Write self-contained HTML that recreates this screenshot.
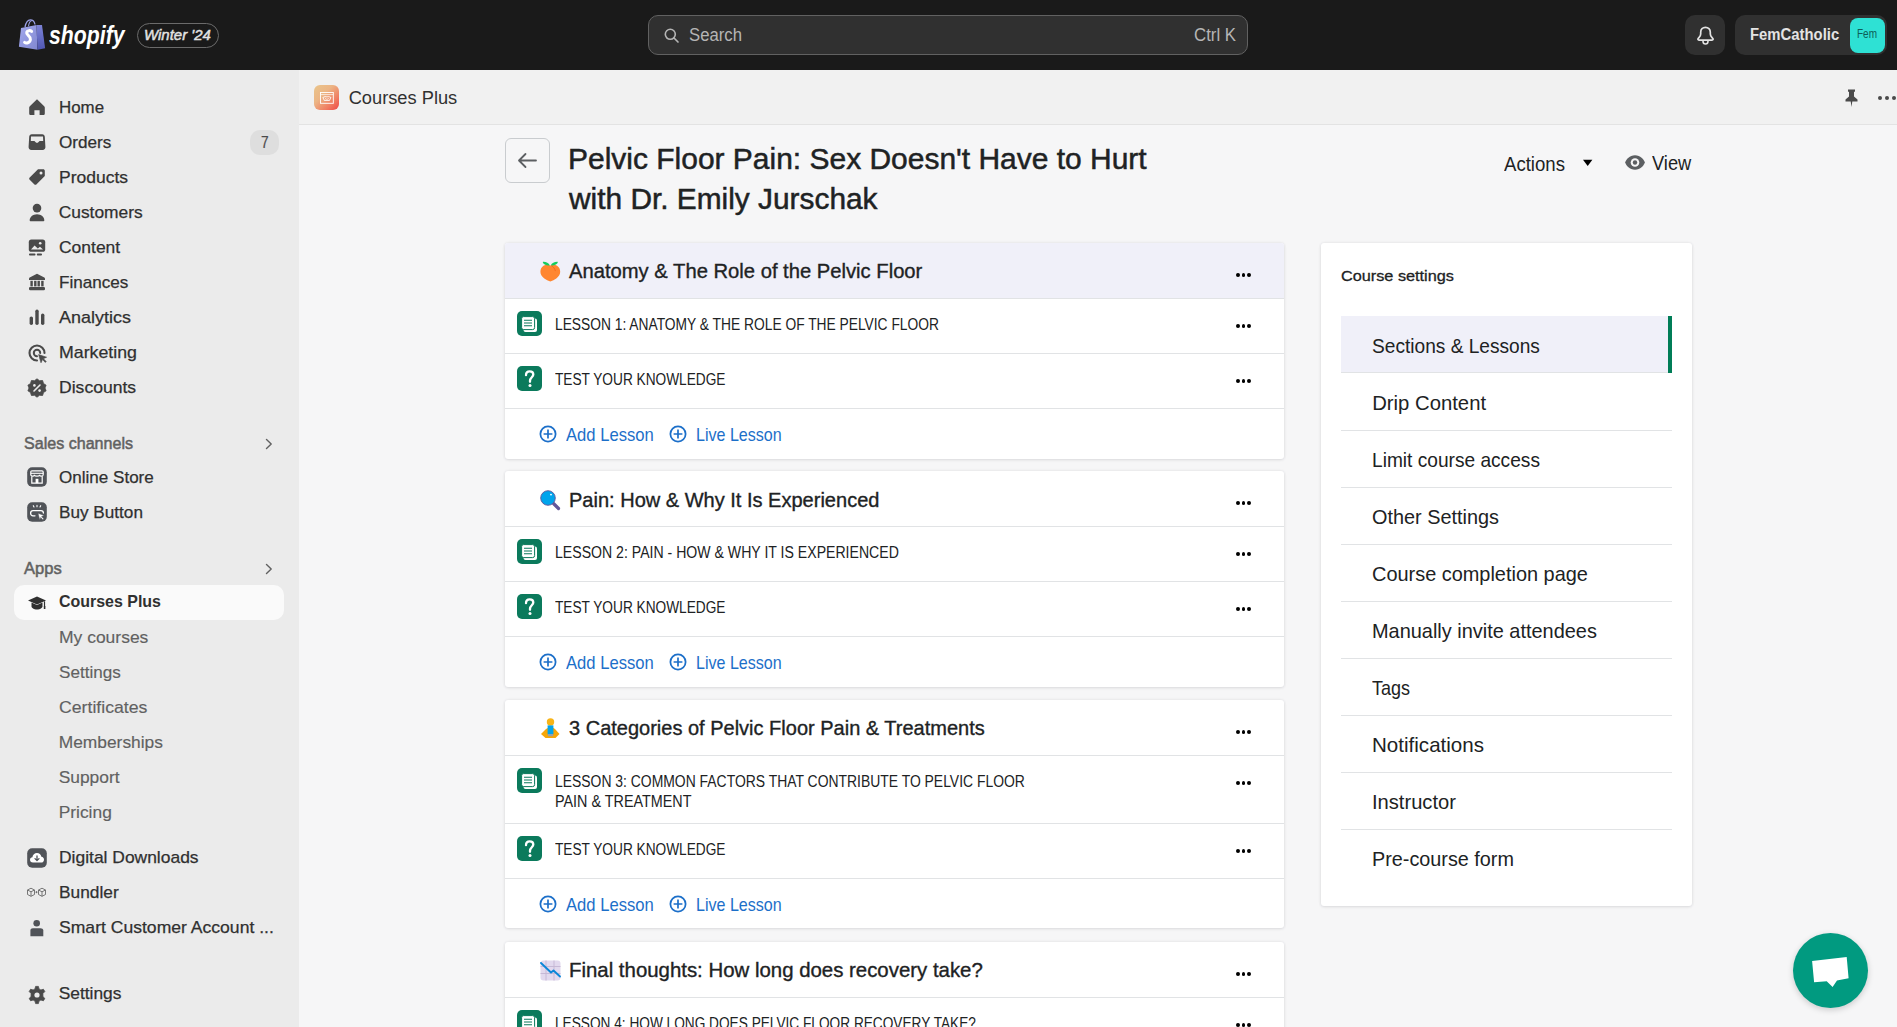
<!DOCTYPE html>
<html><head><meta charset="utf-8"><style>
html,body{margin:0;padding:0;width:1897px;height:1027px;overflow:hidden;background:#f6f6f7;font-family:"Liberation Sans",sans-serif;}
.t{position:absolute;white-space:nowrap;line-height:1;font-family:"Liberation Sans",sans-serif;}
svg{overflow:visible}
</style></head><body>
<div style="position:absolute;left:0px;top:0px;width:1897px;height:70px;background:#1a1a1a"></div>
<div style="position:absolute;left:0px;top:70px;width:299px;height:957px;background:#ebebeb"></div>
<div style="position:absolute;left:299px;top:70px;width:1598px;height:55px;background:#f1f1f1;border-bottom:1px solid #e3e3e3;box-sizing:border-box"></div>
<div style="position:absolute;left:299px;top:125px;width:1598px;height:902px;background:#f6f6f7"></div>
<svg style="position:absolute;left:14px;top:14px;" width="40" height="40" viewBox="0 0 40 40"><defs><linearGradient id="bgf" x1="0" y1="0" x2="1" y2="1"><stop offset="0" stop-color="#a3a9ee"/><stop offset="1" stop-color="#8087d0"/></linearGradient><linearGradient id="bgs" x1="0" y1="0" x2="0" y2="1"><stop offset="0" stop-color="#7d83d6"/><stop offset="1" stop-color="#4f57b3"/></linearGradient></defs><path d="M11 13 C12 8 14 5.8 16.3 5.8 C18.6 5.8 20.5 7.5 21 10.5" fill="none" stroke="#9aa0e6" stroke-width="1.3"/><path d="M14.5 12.2 C15 8.5 16.5 6.5 18.5 6.5" fill="none" stroke="#9aa0e6" stroke-width="1.1"/><path d="M7 14 L22.5 11 L23.5 35.8 L4.9 32.8 Z" fill="url(#bgf)"/><path d="M22.5 11 L28 10.9 L31.1 34.2 L23.5 35.8 Z" fill="url(#bgs)"/><path d="M17.6 17.4 C16.4 16.3 13.4 16.2 12.7 18.2 C11.8 21 16.9 21.6 16.4 25.6 C15.9 29.3 12 29.5 10.6 28.4" fill="none" stroke="#fff" stroke-width="3" stroke-linecap="round"/></svg>
<div class="t" style="left:49.20px;top:23.21px;font-size:25.50px;color:#ffffff;font-weight:bold;font-style:italic;transform:scaleX(0.8333);transform-origin:0 0;">shopify</div>
<div style="position:absolute;left:137px;top:23px;width:82px;height:25px;border:1px solid #6b6b6b;border-radius:13px;box-sizing:border-box"></div>
<div class="t" style="left:143.80px;top:28.19px;font-size:14.78px;color:#e3e3e3;font-style:italic;transform:scaleX(1.0147);transform-origin:0 0;-webkit-text-stroke:0.45px #e3e3e3;">Winter &#x27;24</div>
<div style="position:absolute;left:648px;top:15px;width:600px;height:40px;background:#303030;border:1px solid #616161;border-radius:10px;box-sizing:border-box"></div>
<svg style="position:absolute;left:664px;top:28px;" width="15" height="15" viewBox="0 0 15 15"><circle cx="6.3" cy="6.3" r="5" fill="none" stroke="#b5b5b5" stroke-width="1.6"/><path d="M10 10 L14 14" stroke="#b5b5b5" stroke-width="1.7" stroke-linecap="round"/></svg>
<div class="t" style="left:689.20px;top:26.73px;font-size:17.68px;color:#b5b5b5;transform:scaleX(0.9456);transform-origin:0 0;">Search</div>
<div class="t" style="left:1193.80px;top:26.73px;font-size:17.68px;color:#b5b5b5;transform:scaleX(0.9502);transform-origin:0 0;">Ctrl K</div>
<div style="position:absolute;left:1685px;top:15px;width:40px;height:40px;background:#303030;border-radius:10px"></div>
<svg style="position:absolute;left:1696px;top:26px;" width="19" height="20" viewBox="0 0 19 20"><path d="M9.5 1.3 C6.7 1.3 4.7 3.4 4.7 6.2 V8.1 C4.7 9.5 4.1 10.5 2.9 11.7 L2.3 12.3 C1.5 13.1 1.9 14.1 3 14.1 H16 C17.1 14.1 17.5 13.1 16.7 12.3 L16.1 11.7 C14.9 10.5 14.3 9.5 14.3 8.1 V6.2 C14.3 3.4 12.3 1.3 9.5 1.3 Z" fill="none" stroke="#e3e3e3" stroke-width="1.7" stroke-linejoin="round"/><path d="M7 14.3 V15.3 C7 16.9 8.1 18 9.5 18 C10.9 18 12 16.9 12 15.3 V14.3" fill="none" stroke="#e3e3e3" stroke-width="1.6"/></svg>
<div style="position:absolute;left:1735px;top:15px;width:152px;height:40px;background:#303030;border-radius:10px"></div>
<div class="t" style="left:1749.70px;top:26.81px;font-size:16.52px;color:#e3e3e3;font-weight:bold;transform:scaleX(0.8998);transform-origin:0 0;">FemCatholic</div>
<div style="position:absolute;left:1850px;top:18px;width:35px;height:35px;background:#2ee1d4;border-radius:8px"></div>
<div class="t" style="left:1856.70px;top:29.44px;font-size:11.88px;color:#0d5d57;transform:scaleX(0.8415);transform-origin:0 0;">Fem</div>
<div style="position:absolute;left:314px;top:85px;width:25px;height:25px;border-radius:6px;background:linear-gradient(135deg,#eac58b 0%,#ecb585 38%,#f07d62 72%,#ee4646 100%)"></div>
<svg style="position:absolute;left:320px;top:91.5px;" width="14" height="12" viewBox="0 0 14 12"><rect x="0.5" y="0.5" width="12.8" height="10.8" fill="none" stroke="#fff" stroke-width="0.9"/><path d="M0.5 2.6 H13.3" stroke="#fff" stroke-width="0.7"/><path d="M2.8 5.6 C4.5 4.4 5.8 4.6 6.9 4.9 C8 4.6 9.3 4.4 11 5.6 C10.2 6.4 9.9 7.4 9.6 8.4 H4.2 C3.9 7.4 3.6 6.4 2.8 5.6 Z" fill="none" stroke="#fff" stroke-width="0.9"/><path d="M5 6.4 L6.9 7.4 L8.8 6.4" fill="none" stroke="#fff" stroke-width="0.7"/></svg>
<div class="t" style="left:348.70px;top:89.04px;font-size:18.26px;color:#303030;">Courses Plus</div>
<svg style="position:absolute;left:1845px;top:89px;" width="13" height="18" viewBox="0 0 13 18"><path d="M3 0.5 H10 V2.5 L9 3 V7.5 L12.5 10.5 V12.5 H7.3 L6.5 18 L5.7 12.5 H0.5 V10.5 L4 7.5 V3 L3 2.5 Z" fill="#4a4a4a"/></svg>
<div style="position:absolute;left:1877.5px;top:95.5px;width:4px;height:4px;background:#4a4a4a;border-radius:50%"></div>
<div style="position:absolute;left:1884.5px;top:95.5px;width:4px;height:4px;background:#4a4a4a;border-radius:50%"></div>
<div style="position:absolute;left:1891.5px;top:95.5px;width:4px;height:4px;background:#4a4a4a;border-radius:50%"></div>
<div class="t" style="left:58.70px;top:98.78px;font-size:17.39px;color:#303030;transform:scaleX(0.9713);transform-origin:0 0;-webkit-text-stroke:0.25px #303030;">Home</div>
<div class="t" style="left:58.70px;top:133.78px;font-size:17.39px;color:#303030;transform:scaleX(0.9863);transform-origin:0 0;-webkit-text-stroke:0.25px #303030;">Orders</div>
<div class="t" style="left:58.70px;top:168.78px;font-size:17.39px;color:#303030;transform:scaleX(1.0072);transform-origin:0 0;-webkit-text-stroke:0.25px #303030;">Products</div>
<div class="t" style="left:58.70px;top:203.78px;font-size:17.39px;color:#303030;-webkit-text-stroke:0.25px #303030;">Customers</div>
<div class="t" style="left:58.70px;top:238.78px;font-size:17.39px;color:#303030;transform:scaleX(1.0056);transform-origin:0 0;-webkit-text-stroke:0.25px #303030;">Content</div>
<div class="t" style="left:58.70px;top:273.78px;font-size:17.39px;color:#303030;transform:scaleX(0.9843);transform-origin:0 0;-webkit-text-stroke:0.25px #303030;">Finances</div>
<div class="t" style="left:58.70px;top:308.78px;font-size:17.39px;color:#303030;transform:scaleX(1.0336);transform-origin:0 0;-webkit-text-stroke:0.25px #303030;">Analytics</div>
<div class="t" style="left:58.70px;top:343.78px;font-size:17.39px;color:#303030;transform:scaleX(1.0216);transform-origin:0 0;-webkit-text-stroke:0.25px #303030;">Marketing</div>
<div class="t" style="left:58.70px;top:378.78px;font-size:17.39px;color:#303030;transform:scaleX(1.0112);transform-origin:0 0;-webkit-text-stroke:0.25px #303030;">Discounts</div>
<div style="position:absolute;left:250px;top:130px;width:29px;height:25px;background:#dedede;border-radius:10px"></div>
<div class="t" style="left:260.50px;top:135.01px;font-size:15.94px;color:#4a4a4a;transform:scaleX(0.8590);transform-origin:0 0;-webkit-text-stroke:0.2px #4a4a4a;">7</div>
<div class="t" style="left:23.50px;top:435.36px;font-size:16.23px;color:#616161;transform:scaleX(0.9913);transform-origin:0 0;-webkit-text-stroke:0.5px #616161;">Sales channels</div>
<div class="t" style="left:23.50px;top:559.76px;font-size:16.23px;color:#616161;transform:scaleX(1.0187);transform-origin:0 0;-webkit-text-stroke:0.5px #616161;">Apps</div>
<svg style="position:absolute;left:265px;top:437.5px;" width="8" height="12" viewBox="0 0 8 12"><path d="M1.5 1.5 L6.2 6 L1.5 10.5" fill="none" stroke="#616161" stroke-width="1.4" stroke-linecap="round" stroke-linejoin="round"/></svg>
<svg style="position:absolute;left:265px;top:562.5px;" width="8" height="12" viewBox="0 0 8 12"><path d="M1.5 1.5 L6.2 6 L1.5 10.5" fill="none" stroke="#616161" stroke-width="1.4" stroke-linecap="round" stroke-linejoin="round"/></svg>
<div class="t" style="left:58.70px;top:468.78px;font-size:17.39px;color:#303030;transform:scaleX(0.9814);transform-origin:0 0;-webkit-text-stroke:0.25px #303030;">Online Store</div>
<div class="t" style="left:58.70px;top:503.78px;font-size:17.39px;color:#303030;transform:scaleX(0.9877);transform-origin:0 0;-webkit-text-stroke:0.25px #303030;">Buy Button</div>
<div style="position:absolute;left:14px;top:585px;width:270px;height:35px;background:#fafafa;border-radius:10px"></div>
<div class="t" style="left:58.70px;top:593.48px;font-size:17.39px;color:#303030;font-weight:bold;transform:scaleX(0.9178);transform-origin:0 0;">Courses Plus</div>
<div class="t" style="left:58.70px;top:628.78px;font-size:17.39px;color:#616161;transform:scaleX(1.0060);transform-origin:0 0;-webkit-text-stroke:0.15px #616161;">My courses</div>
<div class="t" style="left:58.70px;top:663.78px;font-size:17.39px;color:#616161;transform:scaleX(0.9830);transform-origin:0 0;-webkit-text-stroke:0.15px #616161;">Settings</div>
<div class="t" style="left:58.70px;top:698.78px;font-size:17.39px;color:#616161;transform:scaleX(1.0177);transform-origin:0 0;-webkit-text-stroke:0.15px #616161;">Certificates</div>
<div class="t" style="left:58.70px;top:733.78px;font-size:17.39px;color:#616161;-webkit-text-stroke:0.15px #616161;">Memberships</div>
<div class="t" style="left:58.70px;top:768.78px;font-size:17.39px;color:#616161;-webkit-text-stroke:0.15px #616161;">Support</div>
<div class="t" style="left:58.70px;top:803.78px;font-size:17.39px;color:#616161;-webkit-text-stroke:0.15px #616161;">Pricing</div>
<div class="t" style="left:58.70px;top:848.78px;font-size:17.39px;color:#303030;transform:scaleX(1.0035);transform-origin:0 0;-webkit-text-stroke:0.25px #303030;">Digital Downloads</div>
<div class="t" style="left:58.70px;top:883.78px;font-size:17.39px;color:#303030;transform:scaleX(0.9964);transform-origin:0 0;-webkit-text-stroke:0.25px #303030;">Bundler</div>
<div class="t" style="left:58.70px;top:918.78px;font-size:17.39px;color:#303030;transform:scaleX(1.0112);transform-origin:0 0;-webkit-text-stroke:0.25px #303030;">Smart Customer Account ...</div>
<div class="t" style="left:58.70px;top:985.28px;font-size:17.39px;color:#303030;-webkit-text-stroke:0.25px #303030;">Settings</div>
<svg style="position:absolute;left:26.5px;top:96.8px;" width="20" height="20" viewBox="0 0 20 20"><path d="M10 2.3 L17.2 9.2 C17.6 9.6 17.8 10.1 17.8 10.6 V16.4 C17.8 17.4 17.1 18 16.2 18 H12.6 V13.2 H7.4 V18 H3.8 C2.9 18 2.2 17.4 2.2 16.4 V10.6 C2.2 10.1 2.4 9.6 2.8 9.2 Z" fill="#4a4a4a"/></svg>
<svg style="position:absolute;left:26.5px;top:132px;" width="20" height="20" viewBox="0 0 20 20"><path d="M4.8 2.3 H15.2 C16.8 2.3 17.6 3.2 17.8 4.8 L18.4 14.8 C18.6 16.6 17.4 18 15.6 18 H4.4 C2.6 18 1.4 16.6 1.6 14.8 L2.2 4.8 C2.4 3.2 3.2 2.3 4.8 2.3 Z" fill="#4a4a4a"/><path d="M4 4.6 H16 L16.2 9 H12.6 L10.8 10.8 H9.2 L7.4 9 H3.8 Z" fill="#ebebeb"/></svg>
<svg style="position:absolute;left:26.5px;top:166.8px;" width="20" height="20" viewBox="0 0 20 20"><path d="M11 2.2 H16.2 C17.1 2.2 17.8 2.9 17.8 3.8 V9 L9.6 17.3 C8.9 18 7.9 18 7.2 17.3 L2.7 12.8 C2 12.1 2 11.1 2.7 10.4 Z" fill="#4a4a4a"/><circle cx="14" cy="6" r="1.5" fill="#ebebeb"/></svg>
<svg style="position:absolute;left:26.5px;top:201.5px;" width="20" height="20" viewBox="0 0 20 20"><circle cx="10" cy="6.1" r="4.3" fill="#4a4a4a"/><path d="M2.7 18.2 C2.7 15 5.8 12.2 10 12.2 C14.2 12.2 17.3 15 17.3 18.2 C17.3 18.8 16.9 19.3 16.2 19.3 H3.8 C3.1 19.3 2.7 18.8 2.7 18.2 Z" fill="#4a4a4a"/></svg>
<svg style="position:absolute;left:26.5px;top:236.8px;" width="20" height="20" viewBox="0 0 20 20"><rect x="1.8" y="2.6" width="16.4" height="12.2" rx="2.6" fill="#4a4a4a"/><path d="M4 12.5 L7.6 8.6 L10.8 11.6 L13 9.8 L16 12.5 Z" fill="#ebebeb"/><circle cx="13.2" cy="6.2" r="1.3" fill="#ebebeb"/><rect x="2" y="16.6" width="6.5" height="1.9" rx="0.9" fill="#4a4a4a"/><rect x="9.8" y="16.6" width="5.2" height="1.9" rx="0.9" fill="#4a4a4a"/></svg>
<svg style="position:absolute;left:26.5px;top:271.5px;" width="20" height="20" viewBox="0 0 20 20"><path d="M10 1.8 L17.3 5.6 C17.8 5.9 18 6.4 18 6.9 V8 H2 V6.9 C2 6.4 2.2 5.9 2.7 5.6 Z" fill="#4a4a4a"/><rect x="3.4" y="8.8" width="2.4" height="5.6" fill="#4a4a4a"/><rect x="7.1" y="8.8" width="2.4" height="5.6" fill="#4a4a4a"/><rect x="10.5" y="8.8" width="2.4" height="5.6" fill="#4a4a4a"/><rect x="14.2" y="8.8" width="2.4" height="5.6" fill="#4a4a4a"/><rect x="2" y="15" width="16" height="3.2" rx="1.3" fill="#4a4a4a"/></svg>
<svg style="position:absolute;left:26.5px;top:306.5px;" width="20" height="20" viewBox="0 0 20 20"><rect x="2.6" y="9.4" width="3.4" height="8.6" rx="1.7" fill="#4a4a4a"/><rect x="8.3" y="2.6" width="3.4" height="15.4" rx="1.7" fill="#4a4a4a"/><rect x="14" y="6.6" width="3.4" height="11.4" rx="1.7" fill="#4a4a4a"/></svg>
<svg style="position:absolute;left:26.5px;top:342.5px;" width="20" height="20" viewBox="0 0 20 20"><path d="M17.5 10 A7.5 7.5 0 1 0 10 17.5" fill="none" stroke="#4a4a4a" stroke-width="2.1" stroke-linecap="round"/><path d="M13.2 10 A3.2 3.2 0 1 0 10 13.2" fill="none" stroke="#4a4a4a" stroke-width="2" stroke-linecap="round"/><path d="M11.6 11.6 L19.6 14.2 L16.4 15.7 L19.2 18.5 L18.3 19.4 L15.5 16.6 L14 19.8 Z" fill="#4a4a4a" stroke="#4a4a4a" stroke-width="0.6" stroke-linejoin="round"/></svg>
<svg style="position:absolute;left:26.5px;top:377.5px;" width="20" height="20" viewBox="0 0 20 20"><path d="M10 0.8 L12.5 2.7 L15.6 2.5 L16.5 5.5 L19.1 7.2 L18 10 L19.1 12.8 L16.5 14.5 L15.6 17.5 L12.5 17.3 L10 19.2 L7.5 17.3 L4.4 17.5 L3.5 14.5 L0.9 12.8 L2 10 L0.9 7.2 L3.5 5.5 L4.4 2.5 L7.5 2.7 Z" fill="#4a4a4a" stroke="#4a4a4a" stroke-width="0.8" stroke-linejoin="round"/><path d="M7 13 L13 7" stroke="#ebebeb" stroke-width="1.6" stroke-linecap="round"/><circle cx="7.4" cy="7.4" r="1.3" fill="#ebebeb"/><circle cx="12.6" cy="12.6" r="1.3" fill="#ebebeb"/></svg>
<svg style="position:absolute;left:26.5px;top:467.2px;" width="20" height="20" viewBox="0 0 20 20"><rect x="0.2" y="0.2" width="19.6" height="19.6" rx="5" fill="#505358"/><path d="M5 3.8 H15 C15.7 3.8 16.2 4.3 16.2 5 V7.4 C16.2 8.4 15.4 9.2 14.4 9.2 C13.5 9.2 12.8 8.6 12.6 7.8 C12.4 8.6 11.3 9.2 10 9.2 C8.7 9.2 7.6 8.6 7.4 7.8 C7.2 8.6 6.5 9.2 5.6 9.2 C4.6 9.2 3.8 8.4 3.8 7.4 V5 C3.8 4.3 4.3 3.8 5 3.8 Z" fill="none" stroke="#fff" stroke-width="1.2"/><path d="M3.8 6.3 H16.2" stroke="#fff" stroke-width="1.1"/><path d="M4.8 9.2 V16.2 H15.2 V9.2" fill="none" stroke="#fff" stroke-width="1.2"/><rect x="8.6" y="11.8" width="2.8" height="4.4" fill="#fff"/></svg>
<svg style="position:absolute;left:26.5px;top:502.3px;" width="20" height="20" viewBox="0 0 20 20"><rect x="0.2" y="0.2" width="19.6" height="19.6" rx="5" fill="#505358"/><path d="M6.3 3.7 L7 5 M10 3.4 V4.8 M13.7 3.7 L13 5" stroke="#fff" stroke-width="1.1" stroke-linecap="round"/><path d="M8 13.8 H6 C4.6 13.8 3.6 12.8 3.6 11.2 C3.6 9.6 4.6 8.6 6 8.6 H14 C15.4 8.6 16.4 9.6 16.4 11" fill="none" stroke="#fff" stroke-width="1.3" stroke-linecap="round"/><path d="M11 11.2 L17.2 13.6 L14.6 14.6 L16.8 16.8 L15.9 17.7 L13.7 15.5 L12.8 18 Z" fill="#fff" stroke="#505358" stroke-width="0.5"/></svg>
<svg style="position:absolute;left:26.5px;top:592.5px;" width="20" height="20" viewBox="0 0 20 20"><path d="M10 3.5 L19 7.5 L10 11.5 L1 7.5 Z" fill="#303030"/><path d="M4.5 9.5 V13.5 C4.5 15 7 16.5 10 16.5 C13 16.5 15.5 15 15.5 13.5 V9.5 L10 12 Z" fill="#303030"/><path d="M17.5 8.3 V13.5" stroke="#303030" stroke-width="1.2"/><rect x="16.8" y="13" width="1.6" height="3" fill="#303030"/></svg>
<svg style="position:absolute;left:26.5px;top:847.5px;" width="20" height="20" viewBox="0 0 20 20"><rect x="0.2" y="0.2" width="19.6" height="19.6" rx="5" fill="#505358"/><path d="M6 14.6 C3.9 14.6 3 13.2 3 11.8 C3 10.4 4 9.3 5.4 9.2 C5.7 6.8 7.6 5 10 5 C12.2 5 14 6.6 14.4 8.8 C16 8.9 17 10.2 17 11.7 C17 13.2 15.9 14.6 14.1 14.6 Z" fill="#fff"/><path d="M10 8 V12.3 M8 10.6 L10 12.6 L12 10.6" fill="none" stroke="#505358" stroke-width="1.3" stroke-linecap="round" stroke-linejoin="round"/></svg>
<svg style="position:absolute;left:26px;top:887px;" width="21" height="11" viewBox="0 0 21 11"><g fill="none" stroke="#6a6a6a" stroke-width="0.9"><path d="M1.5 3 L5 1.2 L8.5 3 V7.5 L5 9.3 L1.5 7.5 Z M1.5 3 L5 4.8 L8.5 3 M5 4.8 V9.3"/><path d="M12.5 3 L16 1.2 L19.5 3 V7.5 L16 9.3 L12.5 7.5 Z M12.5 3 L16 4.8 L19.5 3 M16 4.8 V9.3"/><path d="M9.5 5.2 H11.5 M10.5 4.2 V6.2"/></g></svg>
<svg style="position:absolute;left:26.5px;top:916.5px;" width="20" height="20" viewBox="0 0 20 20"><circle cx="9.7" cy="6.3" r="3.3" fill="#505358"/><path d="M3.4 19.2 V13.4 C3.4 12 4.5 11.2 5.8 11.2 H13.6 C14.9 11.2 16.3 12 16.3 13.4 V19.2 Z" fill="#505358"/></svg>
<svg style="position:absolute;left:26.5px;top:984.5px;" width="20" height="20" viewBox="0 0 20 20"><path d="M8.6 1.4 H11.4 L12 3.9 L13.9 5 L16.4 4.2 L17.8 6.6 L15.9 8.5 V11.5 L17.8 13.4 L16.4 15.8 L13.9 15 L12 16.1 L11.4 18.6 H8.6 L8 16.1 L6.1 15 L3.6 15.8 L2.2 13.4 L4.1 11.5 V8.5 L2.2 6.6 L3.6 4.2 L6.1 5 L8 3.9 Z" fill="#4a4a4a" stroke="#4a4a4a" stroke-width="0.8" stroke-linejoin="round"/><circle cx="10" cy="10" r="2.6" fill="#ebebeb"/></svg>
<div style="position:absolute;left:505px;top:138px;width:45px;height:45px;border:1px solid #c9cccf;border-radius:6px;box-sizing:border-box;background:#f6f6f7"></div>
<svg style="position:absolute;left:517px;top:152px;" width="20" height="17" viewBox="0 0 20 17"><path d="M19 8.5 H2.2 M8.5 2 L2 8.5 L8.5 15" fill="none" stroke="#5c5f62" stroke-width="1.8" stroke-linecap="round" stroke-linejoin="round"/></svg>
<div class="t" style="left:568.40px;top:143.78px;font-size:30.14px;color:#202223;transform:scaleX(0.9947);transform-origin:0 0;-webkit-text-stroke:0.5px #202223;">Pelvic Floor Pain: Sex Doesn&#x27;t Have to Hurt</div>
<div class="t" style="left:568.55px;top:183.58px;font-size:30.14px;color:#202223;transform:scaleX(0.9909);transform-origin:0 0;-webkit-text-stroke:0.5px #202223;">with Dr. Emily Jurschak</div>
<div class="t" style="left:1503.50px;top:154.12px;font-size:20.29px;color:#202223;transform:scaleX(0.9166);transform-origin:0 0;">Actions</div>
<svg style="position:absolute;left:1582px;top:159px;" width="12" height="9" viewBox="0 0 12 9"><path d="M1 0.7 H10.4 L5.7 7 Z" fill="#000"/></svg>
<svg style="position:absolute;left:1625px;top:155px;" width="20" height="15" viewBox="0 0 20 15"><path d="M10 0.3 C4.6 0.3 1.2 4.4 0.2 7.5 C1.2 10.6 4.6 14.7 10 14.7 C15.4 14.7 18.8 10.6 19.8 7.5 C18.8 4.4 15.4 0.3 10 0.3 Z" fill="#5c5f62"/><circle cx="10" cy="7.5" r="4.3" fill="#f6f6f7"/><circle cx="10" cy="7.5" r="2.2" fill="#5c5f62"/></svg>
<div class="t" style="left:1652.20px;top:153.82px;font-size:19.71px;color:#202223;transform:scaleX(0.9274);transform-origin:0 0;">View</div>
<div style="position:absolute;left:505px;top:243px;width:779px;height:216px;background:#fff;border-radius:3px;box-shadow:0 0 3px rgba(63,63,68,0.10),0 1px 3px rgba(63,63,68,0.10)"></div>
<div style="position:absolute;left:505px;top:243px;width:779px;height:55px;background:#f0f0f9;border-radius:3px 3px 0 0"></div>
<svg style="position:absolute;left:539.5px;top:260.5px" width="21" height="21" viewBox="0 0 21 21"><path d="M10.3 4.6 C8 3.6 5.5 3.5 3.5 4.8 C1.4 6.1 0.4 8.3 0.4 10.8 C0.4 13.6 2 15.8 4.3 17.4 C6.1 18.7 8.2 19.8 10.3 20.6 C12.4 19.8 14.5 18.7 16.3 17.4 C18.6 15.8 20.2 13.6 20.2 10.8 C20.2 8.3 19.2 6.1 17.1 4.8 C15.1 3.5 12.6 3.6 10.3 4.6 Z" fill="#ff8630"/><path d="M9.9 4.4 C8.6 1.8 5.6 0.6 2.7 0.9 C3.2 3.4 6.3 4.8 9.9 4.4 Z M10.7 4.4 C12 1.8 15 0.6 17.9 0.9 C17.4 3.4 14.3 4.8 10.7 4.4 Z" fill="#16cc5e"/><path d="M11.8 5 C13.6 6 14.9 7.6 15.3 9.7" fill="none" stroke="#f4661c" stroke-width="0.9" stroke-linecap="round"/></svg>
<div class="t" style="left:568.70px;top:261.02px;font-size:20.29px;color:#202223;transform:scaleX(0.9961);transform-origin:0 0;-webkit-text-stroke:0.35px #202223;">Anatomy &amp; The Role of the Pelvic Floor</div>
<div style="position:absolute;left:1236.05px;top:272.85px;width:3.9px;height:3.9px;background:#000;border-radius:50%"></div>
<div style="position:absolute;left:1241.55px;top:272.85px;width:3.9px;height:3.9px;background:#000;border-radius:50%"></div>
<div style="position:absolute;left:1246.95px;top:272.85px;width:3.9px;height:3.9px;background:#000;border-radius:50%"></div>
<div style="position:absolute;left:505px;top:298px;width:779px;height:1px;background:#e1e3e5"></div>
<div style="position:absolute;left:517px;top:310.5px;width:25px;height:25px;background:#0b7a5c;border-radius:5px"></div>
<svg style="position:absolute;left:521px;top:315.5px;" width="17" height="17" viewBox="0 0 17 17"><rect x="2.5" y="2.5" width="13.5" height="13.5" rx="2" fill="#fff"/><rect x="2.5" y="2.5" width="13.5" height="13.5" rx="2" fill="none" stroke="#0b7a5c" stroke-width="0"/><rect x="0.6" y="0.6" width="13" height="13" rx="2" fill="#fff" stroke="#0b7a5c" stroke-width="1"/><path d="M3 4.2 H11 M3 7 H11 M3 9.8 H11" stroke="#0b7a5c" stroke-width="1.1"/></svg>
<div class="t" style="left:555.20px;top:316.51px;font-size:15.94px;color:#202223;transform:scaleX(0.8652);transform-origin:0 0;">LESSON 1: ANATOMY &amp; THE ROLE OF THE PELVIC FLOOR</div>
<div style="position:absolute;left:1236.05px;top:323.85px;width:3.9px;height:3.9px;background:#000;border-radius:50%"></div>
<div style="position:absolute;left:1241.55px;top:323.85px;width:3.9px;height:3.9px;background:#000;border-radius:50%"></div>
<div style="position:absolute;left:1246.95px;top:323.85px;width:3.9px;height:3.9px;background:#000;border-radius:50%"></div>
<div style="position:absolute;left:505px;top:353px;width:779px;height:1px;background:#e1e3e5"></div>
<div style="position:absolute;left:517px;top:365.5px;width:25px;height:25px;background:#0b7a5c;border-radius:5px"></div>
<svg style="position:absolute;left:517px;top:365.5px;" width="25" height="25" viewBox="0 0 25 25"><path d="M9 9.2 C9 6.8 10.6 5.3 12.7 5.3 C14.8 5.3 16.3 6.7 16.3 8.6 C16.3 11.2 13 11.5 13 14.8 V15.8" fill="none" stroke="#fff" stroke-width="2.3" stroke-linecap="round"/><circle cx="13" cy="19.6" r="1.5" fill="#fff"/></svg>
<div class="t" style="left:555.20px;top:371.51px;font-size:15.94px;color:#202223;transform:scaleX(0.8580);transform-origin:0 0;">TEST YOUR KNOWLEDGE</div>
<div style="position:absolute;left:1236.05px;top:378.85px;width:3.9px;height:3.9px;background:#000;border-radius:50%"></div>
<div style="position:absolute;left:1241.55px;top:378.85px;width:3.9px;height:3.9px;background:#000;border-radius:50%"></div>
<div style="position:absolute;left:1246.95px;top:378.85px;width:3.9px;height:3.9px;background:#000;border-radius:50%"></div>
<div style="position:absolute;left:505px;top:408px;width:779px;height:1px;background:#e1e3e5"></div>
<svg style="position:absolute;left:539.4px;top:424.7px;" width="18" height="18" viewBox="0 0 18 18"><circle cx="9" cy="9" r="7.6" fill="none" stroke="#1c6fc9" stroke-width="1.75"/><path d="M9 4.6 V13.4 M4.6 9 H13.4" stroke="#1c6fc9" stroke-width="1.7"/></svg>
<div class="t" style="left:565.80px;top:425.31px;font-size:19.13px;color:#1c6fc9;transform:scaleX(0.8692);transform-origin:0 0;">Add Lesson</div>
<svg style="position:absolute;left:669.4px;top:424.7px;" width="18" height="18" viewBox="0 0 18 18"><circle cx="9" cy="9" r="7.6" fill="none" stroke="#1c6fc9" stroke-width="1.75"/><path d="M9 4.6 V13.4 M4.6 9 H13.4" stroke="#1c6fc9" stroke-width="1.7"/></svg>
<div class="t" style="left:696.20px;top:425.31px;font-size:19.13px;color:#1c6fc9;transform:scaleX(0.8397);transform-origin:0 0;">Live Lesson</div>
<div style="position:absolute;left:505px;top:471px;width:779px;height:216px;background:#fff;border-radius:3px;box-shadow:0 0 3px rgba(63,63,68,0.10),0 1px 3px rgba(63,63,68,0.10)"></div>
<svg style="position:absolute;left:539.5px;top:490.0px" width="21" height="21" viewBox="0 0 21 21"><path d="M13.5 13.5 L18.5 18.5" stroke="#62579a" stroke-width="3.2" stroke-linecap="round"/><circle cx="8" cy="8" r="7.3" fill="#00a4ec" stroke="#62579a" stroke-width="0.9"/><circle cx="11" cy="4.6" r="0.9" fill="#fff"/></svg>
<div class="t" style="left:568.70px;top:489.92px;font-size:20.29px;color:#202223;transform:scaleX(0.9870);transform-origin:0 0;-webkit-text-stroke:0.35px #202223;">Pain: How &amp; Why It Is Experienced</div>
<div style="position:absolute;left:1236.05px;top:500.85px;width:3.9px;height:3.9px;background:#000;border-radius:50%"></div>
<div style="position:absolute;left:1241.55px;top:500.85px;width:3.9px;height:3.9px;background:#000;border-radius:50%"></div>
<div style="position:absolute;left:1246.95px;top:500.85px;width:3.9px;height:3.9px;background:#000;border-radius:50%"></div>
<div style="position:absolute;left:505px;top:526px;width:779px;height:1px;background:#e1e3e5"></div>
<div style="position:absolute;left:517px;top:538.5px;width:25px;height:25px;background:#0b7a5c;border-radius:5px"></div>
<svg style="position:absolute;left:521px;top:543.5px;" width="17" height="17" viewBox="0 0 17 17"><rect x="2.5" y="2.5" width="13.5" height="13.5" rx="2" fill="#fff"/><rect x="2.5" y="2.5" width="13.5" height="13.5" rx="2" fill="none" stroke="#0b7a5c" stroke-width="0"/><rect x="0.6" y="0.6" width="13" height="13" rx="2" fill="#fff" stroke="#0b7a5c" stroke-width="1"/><path d="M3 4.2 H11 M3 7 H11 M3 9.8 H11" stroke="#0b7a5c" stroke-width="1.1"/></svg>
<div class="t" style="left:555.20px;top:544.51px;font-size:15.94px;color:#202223;transform:scaleX(0.8845);transform-origin:0 0;">LESSON 2: PAIN - HOW &amp; WHY IT IS EXPERIENCED</div>
<div style="position:absolute;left:1236.05px;top:551.85px;width:3.9px;height:3.9px;background:#000;border-radius:50%"></div>
<div style="position:absolute;left:1241.55px;top:551.85px;width:3.9px;height:3.9px;background:#000;border-radius:50%"></div>
<div style="position:absolute;left:1246.95px;top:551.85px;width:3.9px;height:3.9px;background:#000;border-radius:50%"></div>
<div style="position:absolute;left:505px;top:581px;width:779px;height:1px;background:#e1e3e5"></div>
<div style="position:absolute;left:517px;top:593.5px;width:25px;height:25px;background:#0b7a5c;border-radius:5px"></div>
<svg style="position:absolute;left:517px;top:593.5px;" width="25" height="25" viewBox="0 0 25 25"><path d="M9 9.2 C9 6.8 10.6 5.3 12.7 5.3 C14.8 5.3 16.3 6.7 16.3 8.6 C16.3 11.2 13 11.5 13 14.8 V15.8" fill="none" stroke="#fff" stroke-width="2.3" stroke-linecap="round"/><circle cx="13" cy="19.6" r="1.5" fill="#fff"/></svg>
<div class="t" style="left:555.20px;top:599.51px;font-size:15.94px;color:#202223;transform:scaleX(0.8580);transform-origin:0 0;">TEST YOUR KNOWLEDGE</div>
<div style="position:absolute;left:1236.05px;top:606.85px;width:3.9px;height:3.9px;background:#000;border-radius:50%"></div>
<div style="position:absolute;left:1241.55px;top:606.85px;width:3.9px;height:3.9px;background:#000;border-radius:50%"></div>
<div style="position:absolute;left:1246.95px;top:606.85px;width:3.9px;height:3.9px;background:#000;border-radius:50%"></div>
<div style="position:absolute;left:505px;top:636px;width:779px;height:1px;background:#e1e3e5"></div>
<svg style="position:absolute;left:539.4px;top:652.7px;" width="18" height="18" viewBox="0 0 18 18"><circle cx="9" cy="9" r="7.6" fill="none" stroke="#1c6fc9" stroke-width="1.75"/><path d="M9 4.6 V13.4 M4.6 9 H13.4" stroke="#1c6fc9" stroke-width="1.7"/></svg>
<div class="t" style="left:565.80px;top:653.31px;font-size:19.13px;color:#1c6fc9;transform:scaleX(0.8692);transform-origin:0 0;">Add Lesson</div>
<svg style="position:absolute;left:669.4px;top:652.7px;" width="18" height="18" viewBox="0 0 18 18"><circle cx="9" cy="9" r="7.6" fill="none" stroke="#1c6fc9" stroke-width="1.75"/><path d="M9 4.6 V13.4 M4.6 9 H13.4" stroke="#1c6fc9" stroke-width="1.7"/></svg>
<div class="t" style="left:696.20px;top:653.31px;font-size:19.13px;color:#1c6fc9;transform:scaleX(0.8397);transform-origin:0 0;">Live Lesson</div>
<div style="position:absolute;left:505px;top:700px;width:779px;height:228px;background:#fff;border-radius:3px;box-shadow:0 0 3px rgba(63,63,68,0.10),0 1px 3px rgba(63,63,68,0.10)"></div>
<svg style="position:absolute;left:539.5px;top:717.5px" width="21" height="21" viewBox="0 0 21 21"><path d="M1 16 L6 11 L9.5 9 H12 L15 11 L19.5 16 L15.5 20 H5.5 Z" fill="#f6a609"/><circle cx="10.5" cy="4" r="3.7" fill="#f8b418"/><rect x="7.6" y="7.4" width="5.8" height="9" fill="#03a4ec"/><rect x="8" y="16" width="5" height="2.2" fill="#9aa0a6"/></svg>
<div class="t" style="left:568.70px;top:717.92px;font-size:20.29px;color:#202223;transform:scaleX(0.9862);transform-origin:0 0;-webkit-text-stroke:0.35px #202223;">3 Categories of Pelvic Floor Pain &amp; Treatments</div>
<div style="position:absolute;left:1236.05px;top:729.85px;width:3.9px;height:3.9px;background:#000;border-radius:50%"></div>
<div style="position:absolute;left:1241.55px;top:729.85px;width:3.9px;height:3.9px;background:#000;border-radius:50%"></div>
<div style="position:absolute;left:1246.95px;top:729.85px;width:3.9px;height:3.9px;background:#000;border-radius:50%"></div>
<div style="position:absolute;left:505px;top:755px;width:779px;height:1px;background:#e1e3e5"></div>
<div style="position:absolute;left:517px;top:767.5px;width:25px;height:25px;background:#0b7a5c;border-radius:5px"></div>
<svg style="position:absolute;left:521px;top:772.5px;" width="17" height="17" viewBox="0 0 17 17"><rect x="2.5" y="2.5" width="13.5" height="13.5" rx="2" fill="#fff"/><rect x="2.5" y="2.5" width="13.5" height="13.5" rx="2" fill="none" stroke="#0b7a5c" stroke-width="0"/><rect x="0.6" y="0.6" width="13" height="13" rx="2" fill="#fff" stroke="#0b7a5c" stroke-width="1"/><path d="M3 4.2 H11 M3 7 H11 M3 9.8 H11" stroke="#0b7a5c" stroke-width="1.1"/></svg>
<div class="t" style="left:555.20px;top:773.51px;font-size:15.94px;color:#202223;transform:scaleX(0.8731);transform-origin:0 0;">LESSON 3: COMMON FACTORS THAT CONTRIBUTE TO PELVIC FLOOR</div>
<div class="t" style="left:555.20px;top:793.51px;font-size:15.94px;color:#202223;transform:scaleX(0.9013);transform-origin:0 0;">PAIN &amp; TREATMENT</div>
<div style="position:absolute;left:1236.05px;top:780.85px;width:3.9px;height:3.9px;background:#000;border-radius:50%"></div>
<div style="position:absolute;left:1241.55px;top:780.85px;width:3.9px;height:3.9px;background:#000;border-radius:50%"></div>
<div style="position:absolute;left:1246.95px;top:780.85px;width:3.9px;height:3.9px;background:#000;border-radius:50%"></div>
<div style="position:absolute;left:505px;top:823px;width:779px;height:1px;background:#e1e3e5"></div>
<div style="position:absolute;left:517px;top:835.5px;width:25px;height:25px;background:#0b7a5c;border-radius:5px"></div>
<svg style="position:absolute;left:517px;top:835.5px;" width="25" height="25" viewBox="0 0 25 25"><path d="M9 9.2 C9 6.8 10.6 5.3 12.7 5.3 C14.8 5.3 16.3 6.7 16.3 8.6 C16.3 11.2 13 11.5 13 14.8 V15.8" fill="none" stroke="#fff" stroke-width="2.3" stroke-linecap="round"/><circle cx="13" cy="19.6" r="1.5" fill="#fff"/></svg>
<div class="t" style="left:555.20px;top:841.51px;font-size:15.94px;color:#202223;transform:scaleX(0.8580);transform-origin:0 0;">TEST YOUR KNOWLEDGE</div>
<div style="position:absolute;left:1236.05px;top:848.85px;width:3.9px;height:3.9px;background:#000;border-radius:50%"></div>
<div style="position:absolute;left:1241.55px;top:848.85px;width:3.9px;height:3.9px;background:#000;border-radius:50%"></div>
<div style="position:absolute;left:1246.95px;top:848.85px;width:3.9px;height:3.9px;background:#000;border-radius:50%"></div>
<div style="position:absolute;left:505px;top:878px;width:779px;height:1px;background:#e1e3e5"></div>
<svg style="position:absolute;left:539.4px;top:894.7px;" width="18" height="18" viewBox="0 0 18 18"><circle cx="9" cy="9" r="7.6" fill="none" stroke="#1c6fc9" stroke-width="1.75"/><path d="M9 4.6 V13.4 M4.6 9 H13.4" stroke="#1c6fc9" stroke-width="1.7"/></svg>
<div class="t" style="left:565.80px;top:895.31px;font-size:19.13px;color:#1c6fc9;transform:scaleX(0.8692);transform-origin:0 0;">Add Lesson</div>
<svg style="position:absolute;left:669.4px;top:894.7px;" width="18" height="18" viewBox="0 0 18 18"><circle cx="9" cy="9" r="7.6" fill="none" stroke="#1c6fc9" stroke-width="1.75"/><path d="M9 4.6 V13.4 M4.6 9 H13.4" stroke="#1c6fc9" stroke-width="1.7"/></svg>
<div class="t" style="left:696.20px;top:895.31px;font-size:19.13px;color:#1c6fc9;transform:scaleX(0.8397);transform-origin:0 0;">Live Lesson</div>
<div style="position:absolute;left:505px;top:942px;width:779px;height:216px;background:#fff;border-radius:3px;box-shadow:0 0 3px rgba(63,63,68,0.10),0 1px 3px rgba(63,63,68,0.10)"></div>
<svg style="position:absolute;left:539.5px;top:960.0px" width="21" height="21" viewBox="0 0 21 21"><rect x="0.5" y="0.5" width="20" height="20" rx="3" fill="#e2d9ee"/><path d="M6 0.5 V20.5 M14 0.5 V20.5 M0.5 6.5 H20.5 M0.5 13.5 H20.5" stroke="#c4b6d2" stroke-width="0.9"/><path d="M1 3 L11 12.5 L13.5 10.5 L20 16.5" fill="none" stroke="#0a86d8" stroke-width="1.9" stroke-linecap="round" stroke-linejoin="round"/></svg>
<div class="t" style="left:568.70px;top:959.92px;font-size:20.29px;color:#202223;transform:scaleX(1.0056);transform-origin:0 0;-webkit-text-stroke:0.35px #202223;">Final thoughts: How long does recovery take?</div>
<div style="position:absolute;left:1236.05px;top:971.85px;width:3.9px;height:3.9px;background:#000;border-radius:50%"></div>
<div style="position:absolute;left:1241.55px;top:971.85px;width:3.9px;height:3.9px;background:#000;border-radius:50%"></div>
<div style="position:absolute;left:1246.95px;top:971.85px;width:3.9px;height:3.9px;background:#000;border-radius:50%"></div>
<div style="position:absolute;left:505px;top:997px;width:779px;height:1px;background:#e1e3e5"></div>
<div style="position:absolute;left:517px;top:1009.5px;width:25px;height:25px;background:#0b7a5c;border-radius:5px"></div>
<svg style="position:absolute;left:521px;top:1014.5px;" width="17" height="17" viewBox="0 0 17 17"><rect x="2.5" y="2.5" width="13.5" height="13.5" rx="2" fill="#fff"/><rect x="2.5" y="2.5" width="13.5" height="13.5" rx="2" fill="none" stroke="#0b7a5c" stroke-width="0"/><rect x="0.6" y="0.6" width="13" height="13" rx="2" fill="#fff" stroke="#0b7a5c" stroke-width="1"/><path d="M3 4.2 H11 M3 7 H11 M3 9.8 H11" stroke="#0b7a5c" stroke-width="1.1"/></svg>
<div class="t" style="left:555.20px;top:1015.51px;font-size:15.94px;color:#202223;transform:scaleX(0.8573);transform-origin:0 0;">LESSON 4: HOW LONG DOES PELVIC FLOOR RECOVERY TAKE?</div>
<div style="position:absolute;left:1236.05px;top:1022.85px;width:3.9px;height:3.9px;background:#000;border-radius:50%"></div>
<div style="position:absolute;left:1241.55px;top:1022.85px;width:3.9px;height:3.9px;background:#000;border-radius:50%"></div>
<div style="position:absolute;left:1246.95px;top:1022.85px;width:3.9px;height:3.9px;background:#000;border-radius:50%"></div>
<div style="position:absolute;left:505px;top:1052px;width:779px;height:1px;background:#e1e3e5"></div>
<div style="position:absolute;left:517px;top:1064.5px;width:25px;height:25px;background:#0b7a5c;border-radius:5px"></div>
<svg style="position:absolute;left:517px;top:1064.5px;" width="25" height="25" viewBox="0 0 25 25"><path d="M9 9.2 C9 6.8 10.6 5.3 12.7 5.3 C14.8 5.3 16.3 6.7 16.3 8.6 C16.3 11.2 13 11.5 13 14.8 V15.8" fill="none" stroke="#fff" stroke-width="2.3" stroke-linecap="round"/><circle cx="13" cy="19.6" r="1.5" fill="#fff"/></svg>
<div class="t" style="left:555.20px;top:1070.51px;font-size:15.94px;color:#202223;transform:scaleX(0.8580);transform-origin:0 0;">TEST YOUR KNOWLEDGE</div>
<div style="position:absolute;left:1236.05px;top:1077.85px;width:3.9px;height:3.9px;background:#000;border-radius:50%"></div>
<div style="position:absolute;left:1241.55px;top:1077.85px;width:3.9px;height:3.9px;background:#000;border-radius:50%"></div>
<div style="position:absolute;left:1246.95px;top:1077.85px;width:3.9px;height:3.9px;background:#000;border-radius:50%"></div>
<div style="position:absolute;left:505px;top:1107px;width:779px;height:1px;background:#e1e3e5"></div>
<svg style="position:absolute;left:539.4px;top:1123.7px;" width="18" height="18" viewBox="0 0 18 18"><circle cx="9" cy="9" r="7.6" fill="none" stroke="#1c6fc9" stroke-width="1.75"/><path d="M9 4.6 V13.4 M4.6 9 H13.4" stroke="#1c6fc9" stroke-width="1.7"/></svg>
<div class="t" style="left:565.80px;top:1124.31px;font-size:19.13px;color:#1c6fc9;transform:scaleX(0.8692);transform-origin:0 0;">Add Lesson</div>
<svg style="position:absolute;left:669.4px;top:1123.7px;" width="18" height="18" viewBox="0 0 18 18"><circle cx="9" cy="9" r="7.6" fill="none" stroke="#1c6fc9" stroke-width="1.75"/><path d="M9 4.6 V13.4 M4.6 9 H13.4" stroke="#1c6fc9" stroke-width="1.7"/></svg>
<div class="t" style="left:696.20px;top:1124.31px;font-size:19.13px;color:#1c6fc9;transform:scaleX(0.8397);transform-origin:0 0;">Live Lesson</div>
<div style="position:absolute;left:1321px;top:243px;width:371px;height:663px;background:#fff;border-radius:3px;box-shadow:0 0 3px rgba(63,63,68,0.10),0 1px 3px rgba(63,63,68,0.10)"></div>
<div class="t" style="left:1341.20px;top:268.37px;font-size:15.51px;color:#202223;transform:scaleX(1.0485);transform-origin:0 0;-webkit-text-stroke:0.3px #202223;">Course settings</div>
<div style="position:absolute;left:1341px;top:316px;width:331px;height:57px;background:#f0f0f9;border-bottom:1px solid #e1e3e5;box-sizing:border-box"></div>
<div style="position:absolute;left:1667.5px;top:316px;width:4.5px;height:57px;background:#007d57"></div>
<div class="t" style="left:1372.20px;top:335.82px;font-size:20.29px;color:#202223;transform:scaleX(0.9425);transform-origin:0 0;">Sections &amp; Lessons</div>
<div style="position:absolute;left:1341px;top:429.5px;width:331px;height:1px;background:#e1e3e5"></div>
<div class="t" style="left:1372.20px;top:392.82px;font-size:20.29px;color:#202223;">Drip Content</div>
<div style="position:absolute;left:1341px;top:486.5px;width:331px;height:1px;background:#e1e3e5"></div>
<div class="t" style="left:1372.20px;top:449.82px;font-size:20.29px;color:#202223;transform:scaleX(0.9431);transform-origin:0 0;">Limit course access</div>
<div style="position:absolute;left:1341px;top:543.5px;width:331px;height:1px;background:#e1e3e5"></div>
<div class="t" style="left:1372.20px;top:506.82px;font-size:20.29px;color:#202223;transform:scaleX(0.9795);transform-origin:0 0;">Other Settings</div>
<div style="position:absolute;left:1341px;top:600.5px;width:331px;height:1px;background:#e1e3e5"></div>
<div class="t" style="left:1372.20px;top:563.82px;font-size:20.29px;color:#202223;transform:scaleX(0.9821);transform-origin:0 0;">Course completion page</div>
<div style="position:absolute;left:1341px;top:657.5px;width:331px;height:1px;background:#e1e3e5"></div>
<div class="t" style="left:1372.20px;top:620.82px;font-size:20.29px;color:#202223;transform:scaleX(0.9827);transform-origin:0 0;">Manually invite attendees</div>
<div style="position:absolute;left:1341px;top:714.5px;width:331px;height:1px;background:#e1e3e5"></div>
<div class="t" style="left:1372.20px;top:677.82px;font-size:20.29px;color:#202223;transform:scaleX(0.8876);transform-origin:0 0;">Tags</div>
<div style="position:absolute;left:1341px;top:771.5px;width:331px;height:1px;background:#e1e3e5"></div>
<div class="t" style="left:1372.20px;top:734.82px;font-size:20.29px;color:#202223;transform:scaleX(1.0138);transform-origin:0 0;">Notifications</div>
<div style="position:absolute;left:1341px;top:828.5px;width:331px;height:1px;background:#e1e3e5"></div>
<div class="t" style="left:1372.20px;top:791.82px;font-size:20.29px;color:#202223;transform:scaleX(0.9928);transform-origin:0 0;">Instructor</div>
<div class="t" style="left:1372.20px;top:848.82px;font-size:20.29px;color:#202223;transform:scaleX(0.9761);transform-origin:0 0;">Pre-course form</div>
<div style="position:absolute;left:1793px;top:932.7px;width:75px;height:75px;background:#019a80;border-radius:50%;box-shadow:0 2px 6px rgba(0,0,0,0.18)"></div>
<svg style="position:absolute;left:1812px;top:955px;" width="38" height="34" viewBox="0 0 38 34"><path d="M0.1 5.9 L34.7 2 L36.6 23.2 L25 25.4 L20.6 32 L14.7 26.3 L2.1 27.3 Z" fill="#fff"/></svg>
</body></html>
